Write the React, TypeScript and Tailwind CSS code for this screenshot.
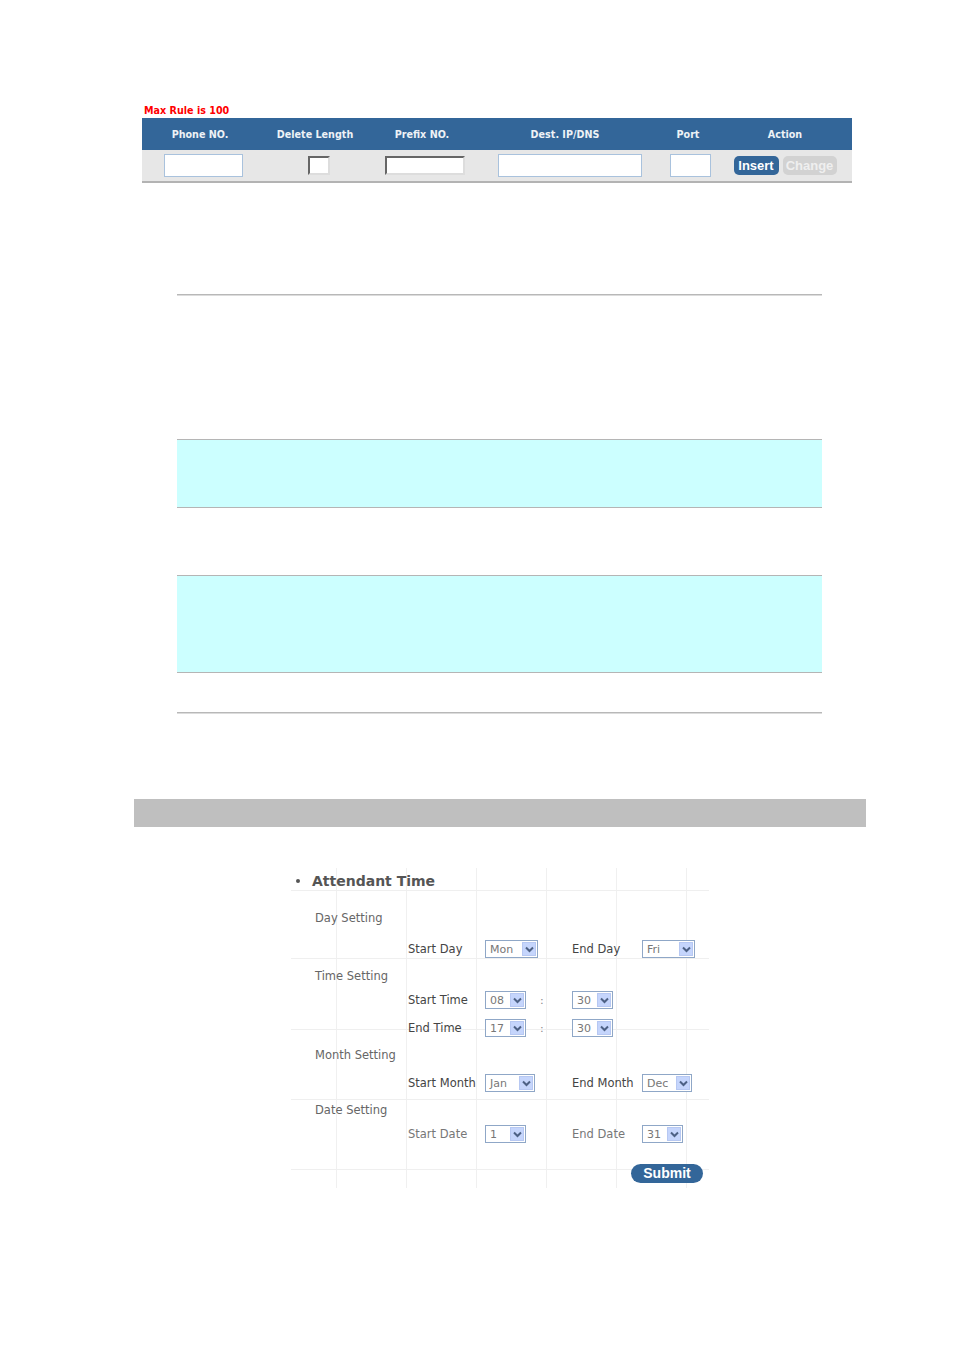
import React from "react";

function Arrow() {
  return (
    <div className="flex h-[14px] w-[14px] items-center justify-center bg-[#c5d5fc] border border-[#b7c8f2]">
      <svg width="9" height="7" viewBox="0 0 9 7">
        <path d="M1 1.5 L4.5 5 L8 1.5" fill="none" stroke="#4d6185" strokeWidth="2" />
      </svg>
    </div>
  );
}

function Sel({ v, w }: { v: string; w: string }) {
  return (
    <div className={`flex h-[18px] items-center border border-[#8fa7c7] bg-white pr-[1px] ${w}`}>
      <span className="flex-1 pl-[4px] pt-[1px] text-[11px] leading-[16px] text-[#777] font-['DejaVu_Sans',Verdana,sans-serif]">{v}</span>
      <Arrow />
    </div>
  );
}

const lbl = "pt-[2px] text-[11.5px] font-['DejaVu_Sans',Verdana,sans-serif] whitespace-nowrap";
const sec = "pt-[2px] text-[11.5px] text-[#666] font-['DejaVu_Sans',Verdana,sans-serif] whitespace-nowrap";

function PairRow({
  h,
  l1,
  s1,
  l2,
  s2,
  light,
}: {
  h: string;
  l1: string;
  s1: React.ReactNode;
  l2: string;
  s2: React.ReactNode;
  light?: boolean;
}) {
  const c = light ? "text-[#777]" : "text-[#444]";
  return (
    <div className={`flex items-center pl-[117px] ${h}`}>
      <div className={`w-[77px] ${lbl} ${c}`}>{l1}</div>
      <div className="w-[87px]">{s1}</div>
      <div className={`w-[70px] ${lbl} ${c}`}>{l2}</div>
      <div>{s2}</div>
    </div>
  );
}

function TimeRow({ h, l, a, b }: { h: string; l: string; a: string; b: string }) {
  return (
    <div className={`flex items-center pl-[117px] ${h}`}>
      <div className={`w-[77px] ${lbl} text-[#444]`}>{l}</div>
      <div className="flex w-[87px] items-center">
        <Sel v={a} w="w-[41px]" />
        <span className="ml-[14px] pt-[2px] text-[11px] text-[#888] font-['DejaVu_Sans',sans-serif]">:</span>
      </div>
      <Sel v={b} w="w-[41px]" />
    </div>
  );
}

function GridBg() {
  const rows = ["h-[23px]", "h-[68px]", "h-[71px]", "h-[70px]", "h-[70px]", "h-[18px]"];
  const cols = ["w-[46px]", "w-[70px]", "w-[70px]", "w-[70px]", "w-[70px]", "w-[70px]", "w-[22px]"];
  return (
    <div className="mt-[8px] flex flex-col [grid-area:1/1]">
      {rows.map((r, i) => (
        <div key={i} className={`flex ${r} ${i < rows.length - 1 ? "border-b border-[#efefef]" : ""}`}>
          {cols.map((c, j) => (
            <div key={j} className={`${c} h-full ${j < cols.length - 1 ? "border-r border-[#f0f0f0]" : ""}`} />
          ))}
        </div>
      ))}
    </div>
  );
}

export default function App() {
  const head = "flex items-center justify-center pt-[2px] text-[9.6px] font-bold text-[#eef2f6] font-['DejaVu_Sans',Verdana,sans-serif]";
  const cell = "flex items-center justify-center";
  return (
    <div className="min-h-[1350px] w-[954px] bg-white">
      <div className="pl-[142px] pt-[104px]">
        <div className="h-[12px] pl-[2px] pt-[1px] text-[9.6px] font-bold leading-[12px] text-[#ff0000] font-['DejaVu_Sans',Verdana,sans-serif]">
          Max Rule is 100
        </div>
        <div className="mt-[2px] w-[710px]">
          <div className="grid h-[32px] grid-cols-[116px_114px_100px_186px_60px_134px] bg-[#336699]">
            <div className={head}>Phone NO.</div>
            <div className={head}>Delete Length</div>
            <div className={head}>Prefix NO.</div>
            <div className={head}>Dest. IP/DNS</div>
            <div className={head}>Port</div>
            <div className={head}>Action</div>
          </div>
          <div className="grid h-[33px] grid-cols-[122px_110px_102px_188px_52px_136px] border-b-2 border-[#b3b3b3] bg-[#e7e7e7]">
            <div className={cell}>
              <div className="h-[23px] w-[79px] border border-[#a9c2dd] bg-white" />
            </div>
            <div className={cell}>
              <div className="h-[19px] w-[22px] border-2 border-t-[#666] border-l-[#666] border-r-[#ddd] border-b-[#ddd] bg-white" />
            </div>
            <div className={cell}>
              <div className="h-[19px] w-[80px] border-2 border-t-[#666] border-l-[#666] border-r-[#ddd] border-b-[#ddd] bg-white" />
            </div>
            <div className={cell}>
              <div className="h-[23px] w-[144px] border border-[#a9c2dd] bg-white" />
            </div>
            <div className={cell}>
              <div className="h-[23px] w-[41px] border border-[#a9c2dd] bg-white" />
            </div>
            <div className="flex items-center justify-center gap-[4px] pl-[2px]">
              <div className="flex h-[19px] w-[45px] items-center justify-center rounded-[5px] bg-[#336699] text-[13px] font-bold text-white font-['Liberation_Sans',Arial,sans-serif]">
                Insert
              </div>
              <div className="flex h-[19px] w-[54px] items-center justify-center rounded-[5px] bg-[#d2d2d2] text-[13px] font-bold text-[#efefef] font-['Liberation_Sans',Arial,sans-serif]">
                Change
              </div>
            </div>
          </div>
        </div>
      </div>

      <div className="ml-[177px] mt-[111px] h-[2px] w-[645px] border-t border-[#b8b8b8] bg-[#dcdcdc]" />

      <div className="ml-[177px] mt-[143px] h-[69px] w-[645px] border-y border-[#b5b5b5] bg-[#ccffff]" />

      <div className="ml-[177px] mt-[67px] h-[98px] w-[645px] border-y border-[#b5b5b5] bg-[#ccffff]" />

      <div className="ml-[177px] mt-[39px] h-[2px] w-[645px] border-t border-[#b8b8b8] bg-[#dcdcdc]" />

      <div className="ml-[134px] mt-[85px] h-[28px] w-[732px] bg-[#bfbfbf]" />

      <div className="ml-[291px] mt-[33px] grid w-[418px]">
        <GridBg />
        <div className="flex flex-col [grid-area:1/1]">
          <div className="flex h-[42px] items-center">
            <div className="ml-[5px] h-[4px] w-[4px] rounded-full bg-[#555]" />
            <span className="ml-[12px] pt-[1px] text-[14px] font-bold text-[#555] font-['DejaVu_Sans',Verdana,sans-serif]">
              Attendant Time
            </span>
          </div>
          <div className={`flex h-[32px] items-center pl-[24px] ${sec}`}>Day Setting</div>
          <PairRow
            h="h-[30px]"
            l1="Start Day"
            s1={<Sel v="Mon" w="w-[53px]" />}
            l2="End Day"
            s2={<Sel v="Fri" w="w-[53px]" />}
          />
          <div className={`flex h-[24px] items-center pl-[24px] ${sec}`}>Time Setting</div>
          <TimeRow h="h-[24px]" l="Start Time" a="08" b="30" />
          <TimeRow h="h-[32px]" l="End Time" a="17" b="30" />
          <div className={`flex h-[22px] items-center pl-[24px] ${sec}`}>Month Setting</div>
          <PairRow
            h="h-[34px]"
            l1="Start Month"
            s1={<Sel v="Jan" w="w-[50px]" />}
            l2="End Month"
            s2={<Sel v="Dec" w="w-[50px]" />}
          />
          <div className={`flex h-[20px] items-center pl-[24px] ${sec}`}>Date Setting</div>
          <PairRow
            h="h-[28px]"
            l1="Start Date"
            s1={<Sel v="1" w="w-[41px]" />}
            l2="End Date"
            s2={<Sel v="31" w="w-[41px]" />}
            light
          />
          <div className="flex h-[50px] items-center pl-[340px]">
            <div className="flex h-[19px] w-[72px] items-center justify-center rounded-full bg-[#336699] text-[14px] font-bold text-white font-['Liberation_Sans',Arial,sans-serif]">
              Submit
            </div>
          </div>
        </div>
      </div>
    </div>
  );
}
